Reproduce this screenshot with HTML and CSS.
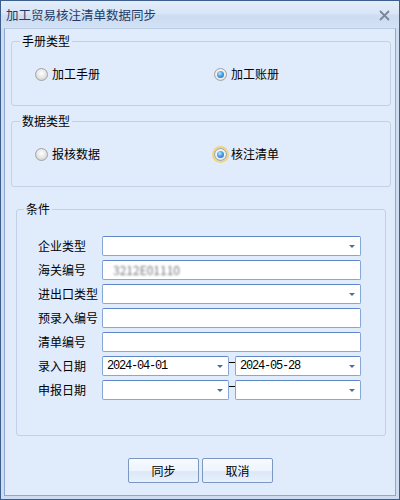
FILE: index.html
```html
<!DOCTYPE html>
<html lang="zh">
<head>
<meta charset="utf-8">
<link rel="stylesheet" href="styles.css">
</head>
<body>
<div class="window">
  <div class="titlebar">
    <span class="title">加工贸易核注清单数据同步</span>
    <svg class="close" width="11" height="11" viewBox="0 0 11 11"><path d="M1 1 L10 10 M10 1 L1 10" stroke="#7c8797" stroke-width="1.8" fill="none"/></svg>
  </div>
  <div class="client">
    <fieldset class="group g1">
      <legend>手册类型</legend>
      <div class="radios">
        <label class="opt"><span class="radio"></span>加工手册</label>
        <label class="opt"><span class="radio checked"><span class="dot"></span></span>加工账册</label>
      </div>
    </fieldset>
    <fieldset class="group g2">
      <legend>数据类型</legend>
      <div class="radios">
        <label class="opt"><span class="radio"></span>报核数据</label>
        <label class="opt"><span class="radio checked focus"><span class="dot"></span></span>核注清单</label>
      </div>
    </fieldset>
    <fieldset class="group g3">
      <legend>条件</legend>
      <div class="form">
        <span class="lbl">企业类型</span>
        <div class="input combo"><span class="val"></span><span class="arrow"></span></div>
        <span class="lbl">海关编号</span>
        <div class="input"><span class="val blur">3212E01110</span></div>
        <span class="lbl">进出口类型</span>
        <div class="input combo"><span class="val"></span><span class="arrow"></span></div>
        <span class="lbl">预录入编号</span>
        <div class="input"><span class="val"></span></div>
        <span class="lbl">清单编号</span>
        <div class="input"><span class="val"></span></div>
        <span class="lbl">录入日期</span>
        <div class="range">
          <div class="input combo d1"><span class="val mono">2024-04-01</span><span class="arrow"></span></div>
          <span class="dash"></span>
          <div class="input combo d2"><span class="val mono">2024-05-28</span><span class="arrow"></span></div>
        </div>
        <span class="lbl">申报日期</span>
        <div class="range">
          <div class="input combo d1"><span class="val mono"></span><span class="arrow"></span></div>
          <span class="dash"></span>
          <div class="input combo d2"><span class="val mono"></span><span class="arrow"></span></div>
        </div>
      </div>
    </fieldset>
    <div class="buttons">
      <button class="btn">同步</button>
      <button class="btn">取消</button>
    </div>
  </div>
</div>
</body>
</html>
```
FILE: styles.css
```css
* { box-sizing: border-box; }
body {
  margin: 0;
  font-family: "Noto Sans CJK SC", "Noto Sans", sans-serif;
  font-size: 12px;
  color: #000;
}
.window {
  width: 400px;
  height: 500px;
  border: 1px solid #3e5f8e;
  background: #cddcf0;
  padding: 0 3px 3px 3px;
  display: flex;
  flex-direction: column;
}
.titlebar {
  height: 27px;
  margin: 0 -3px;
  padding: 0 9px 0 5px;
  display: flex;
  align-items: center;
  justify-content: space-between;
  background: linear-gradient(#e3edfa 0%, #d9e6f7 45%, #ccdcf1 55%, #d2e1f4 100%);
}
.title {
  font-size: 12.5px;
  color: #1f3b66;
  line-height: 14px;
  padding-top: 1px;
}
.close { display: block; margin-top: 1px; }
.client {
  flex: 1;
  border: 1px solid #8ea9ce;
  border-top-color: #b9cde8;
  background: #e0ebfb;
  display: flex;
  flex-direction: column;
}
.group {
  border: 1px solid #c2d1e5;
  border-radius: 3px;
  margin: 0;
  min-width: 0;
}
.group legend {
  padding: 0 2px;
  line-height: 14px;
  font-size: 12px;
}
.g1 {
  margin: 5px 4px 0 6px;
  padding: 18px 8px 23px 8px;
}
.g2 {
  margin: 8px 4px 0 6px;
  padding: 18px 8px 24px 8px;
}
.g3 {
  margin: 15px 9px 0 11px;
  padding: 20px 7px 0 7px;
  height: 234px;
}
.radios {
  display: grid;
  grid-template-columns: 179px auto;
  padding-left: 15px;
  height: 16px;
  align-items: center;
}
.opt {
  display: flex;
  align-items: center;
  gap: 4px;
  line-height: 16px;
}
.radio {
  width: 13px;
  height: 13px;
  border-radius: 50%;
  border: 1px solid #a3a3a3;
  background: radial-gradient(circle at 50% 40%, #ffffff 0%, #e9e9e9 45%, #c6c6c6 100%);
  display: flex;
  align-items: center;
  justify-content: center;
  flex: none;
}
.radio.checked {
  background: radial-gradient(circle at 50% 45%, #ffffff 0%, #f2f2f2 50%, #c9c9c9 100%);
}
.radio.focus {
  box-shadow: 0 0 0 2px #f3d47f;
}
.dot {
  width: 7px;
  height: 7px;
  border-radius: 50%;
  background: radial-gradient(circle at 40% 35%, #bfe7ff 0%, #4aa0e0 45%, #1d62a8 100%);
}
.form {
  margin-left: 14px;
  display: grid;
  grid-template-columns: 64px 259px;
  grid-auto-rows: 20px;
  row-gap: 4px;
  align-items: center;
}
.lbl {
  line-height: 20px;
  white-space: nowrap;
}
.input {
  height: 20px;
  background: #fff;
  border: 1px solid #86a8d6;
  border-top-color: #5f89c6;
  border-radius: 2px;
  display: flex;
  align-items: center;
  padding: 0 5px 0 4px;
}
.val {
  flex: 1;
  line-height: 16px;
  white-space: nowrap;
}
.mono {
  font-family: "Liberation Mono", "DejaVu Sans Mono", monospace;
  font-size: 12px;
  letter-spacing: -1.2px;
}
.blur {
  color: #777;
  filter: blur(1px);
  padding-left: 6px;
}
.arrow {
  width: 0;
  height: 0;
  border-left: 3px solid transparent;
  border-right: 3px solid transparent;
  border-top: 3px solid #4a6e9e;
  flex: none;
}
.range {
  display: flex;
  align-items: flex-start;
  height: 20px;
}
.d1 { width: 127px; }
.d2 { width: 126px; }
.dash {
  width: 6px;
  height: 1px;
  background: #000;
  margin-top: 6px;
}
.buttons {
  display: flex;
  justify-content: center;
  gap: 3px;
  margin-top: 22px;
  padding-left: 1px;
}
.btn {
  width: 71px;
  height: 25px;
  font-family: inherit;
  font-size: 12px;
  color: #000;
  border: 1px solid #7a98c2;
  border-radius: 2px;
  background: linear-gradient(#f7faff 0%, #eef4fd 50%, #dce8f8 55%, #e8f0fb 100%);
  padding: 0;
  line-height: 23px;
}
```
